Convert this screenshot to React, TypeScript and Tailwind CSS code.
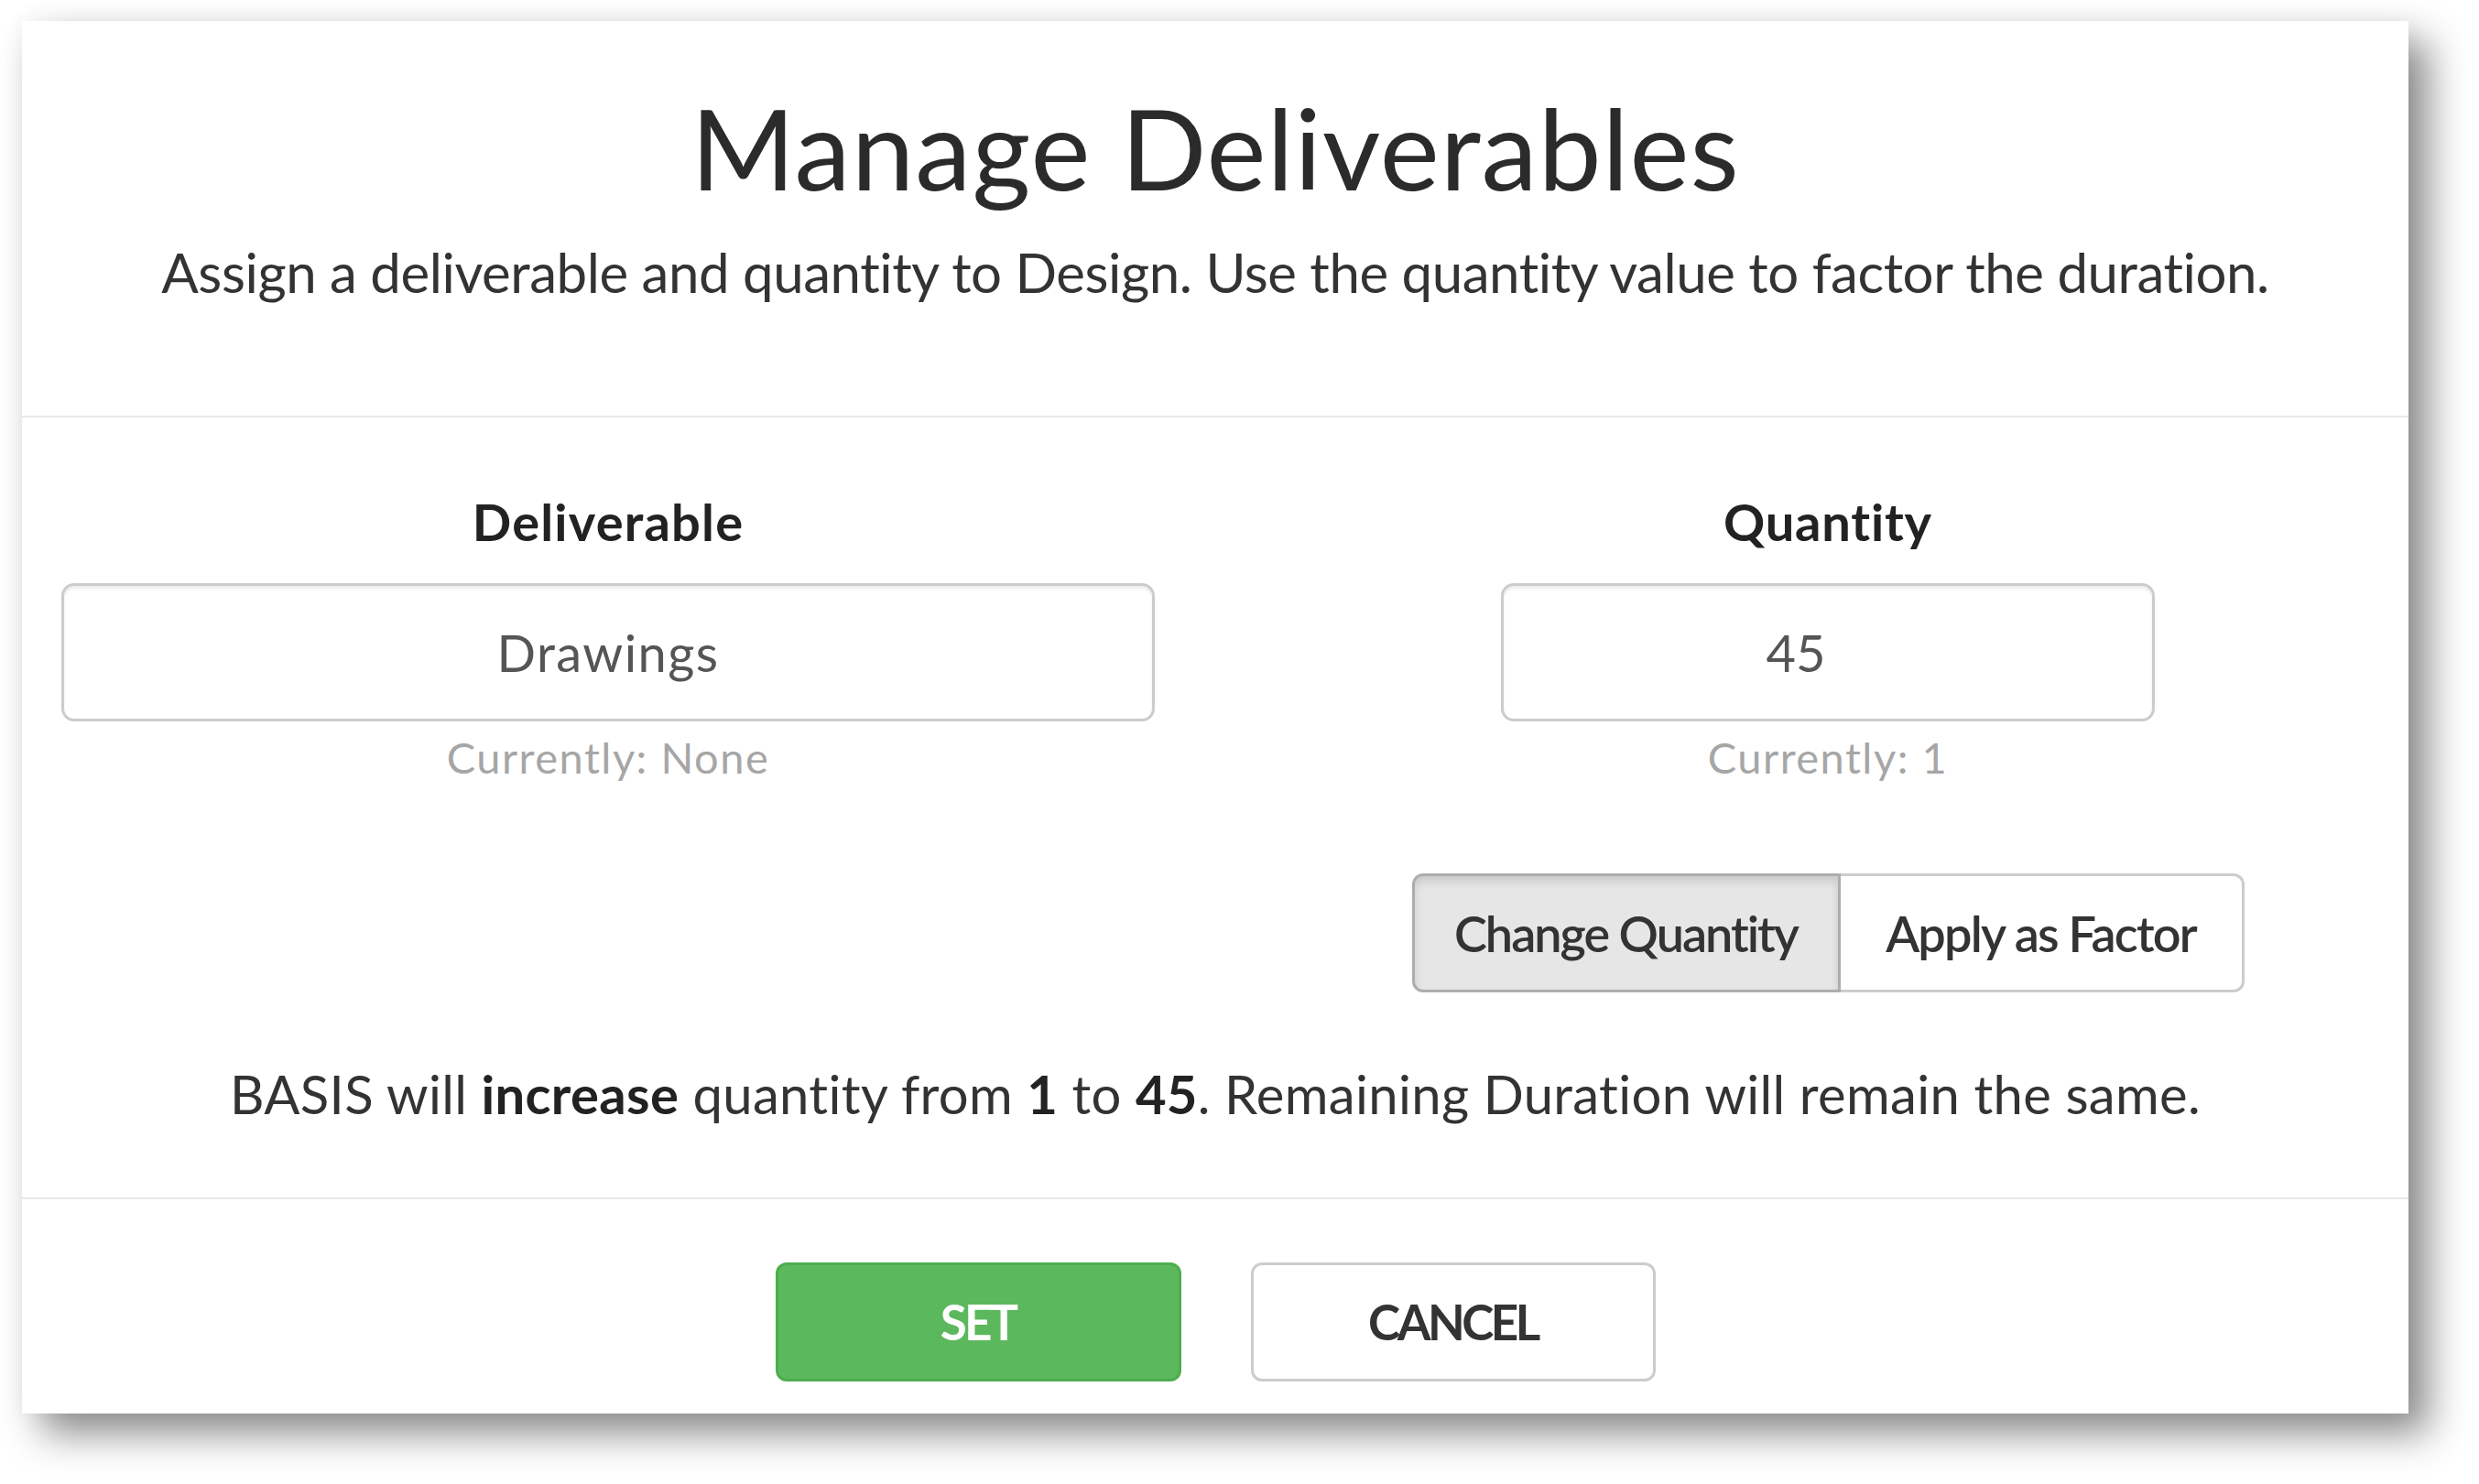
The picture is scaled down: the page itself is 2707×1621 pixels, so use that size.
import { useState } from 'react'

const font = { fontFamily: 'Lato, "Open Sans", sans-serif' }

export default function App() {
  const [mode, setMode] = useState<'change' | 'factor'>('change')
  const [deliverable, setDeliverable] = useState('Drawings')
  const [qty, setQty] = useState('45')

  return (
    <div className="w-[2707px] h-[1621px] bg-white overflow-hidden pt-[23px] pl-[24px]" style={font}>
      <div className="w-[2606px] h-[1521px] bg-white flex flex-col shadow-[22px_22px_40px_rgba(0,0,0,0.45),0_0_24px_rgba(0,0,0,0.05)]">
        {/* header */}
        <div className="pt-[76px] pb-[127px] border-b-2 border-[#e8e8e8] flex flex-col items-center">
          <h1 className="text-[123px] leading-none tracking-[1px] text-[#2b2b2b] font-normal">Manage Deliverables</h1>
          <p className="mt-[45px] text-[60px] leading-none tracking-[-0.45px] text-[#333]">
            Assign a deliverable and quantity to Design. Use the quantity value to factor the duration.
          </p>
        </div>

        {/* body */}
        <div className="pt-[86px] px-[43px] flex flex-col">
          <div className="flex gap-[144px]">
            <div className="w-[1194px] flex flex-col items-center">
              <label className="text-[56px] leading-none tracking-[1.2px] font-bold text-[#222]">Deliverable</label>
              <input value={deliverable} onChange={e => setDeliverable(e.target.value)}
                className="mt-[39px] w-full h-[151px] border-[3px] border-[#cccccc] rounded-[14px] text-center text-[56px] tracking-[1.4px] text-[#555] outline-none shadow-[inset_0_3px_3px_rgba(0,0,0,0.075)]" />
              <span className="mt-[16px] text-[47px] leading-none tracking-[1.5px] text-[#a6a6a6]">Currently: None</span>
            </div>
            <div className="flex-1 flex flex-col items-center">
              <label className="text-[56px] leading-none tracking-[0.8px] font-bold text-[#222]">Quantity</label>
              <input value={qty} onChange={e => setQty(e.target.value)}
                className="mt-[39px] w-[714px] h-[151px] border-[3px] border-[#cccccc] rounded-[14px] text-center pr-[70px] text-[56px] text-[#555] outline-none shadow-[inset_0_3px_3px_rgba(0,0,0,0.075)]" />
              <span className="mt-[16px] text-[47px] leading-none tracking-[1.5px] text-[#a6a6a6]">Currently: 1</span>
              <div className="mt-[103px] flex">
                <button onClick={() => setMode('change')}
                  className={`w-[468px] h-[130px] rounded-l-[12px] border-[3px] text-[54px] tracking-[-2px] font-semibold text-[#333] ${mode === 'change' ? 'bg-[#e6e6e6] border-[#adadad] shadow-[inset_0_6px_10px_rgba(0,0,0,0.125)]' : 'bg-white border-[#cccccc]'}`}>
                  Change Quantity
                </button>
                <button onClick={() => setMode('factor')}
                  className={`w-[441px] h-[130px] rounded-r-[12px] border-[3px] border-l-0 text-[54px] tracking-[-1.8px] font-semibold text-[#333] ${mode === 'factor' ? 'bg-[#e6e6e6] border-[#adadad] shadow-[inset_0_6px_10px_rgba(0,0,0,0.125)]' : 'bg-white border-[#cccccc]'}`}>
                  Apply as Factor
                </button>
              </div>
            </div>
          </div>
          <p className="mt-[82px] pb-[84px] text-center text-[58px] leading-none tracking-[0.34px] text-[#333]">
            BASIS will <b className="font-bold text-[#222]">increase</b> quantity from <b className="font-bold text-[#222]">1</b> to <b className="font-bold text-[#222]">45</b>. Remaining Duration will remain the same.
          </p>
        </div>

        {/* footer */}
        <div className="border-t-2 border-[#e8e8e8] pt-[69px] flex justify-center gap-[76px]">
          <button className="w-[443px] h-[130px] rounded-[12px] bg-[#5cb85c] border-[3px] border-[#4cae4c] text-white text-[53px] tracking-[-3px] font-bold">
            SET
          </button>
          <button className="w-[442px] h-[130px] rounded-[12px] bg-white border-[3px] border-[#cccccc] text-[#333] text-[53px] tracking-[-3.5px] font-bold">
            CANCEL
          </button>
        </div>
      </div>
    </div>
  )
}
